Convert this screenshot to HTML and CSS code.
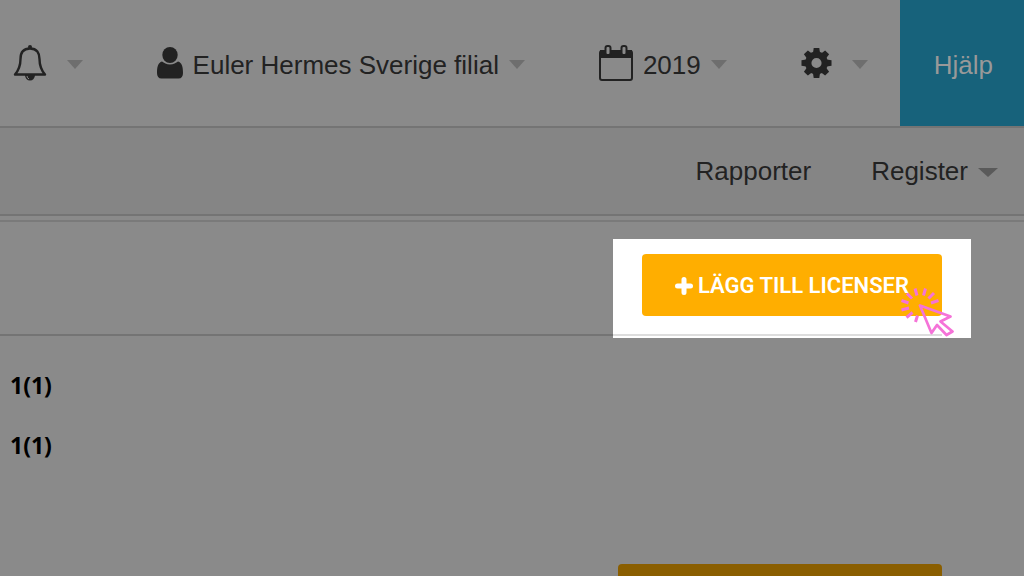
FILE: index.html
```
<!DOCTYPE html>
<html lang="sv">
<head>
    <meta charset="UTF-8">
    <meta name="viewport" content="width=device-width, initial-scale=1.0">
    <title>Licenser</title>
    <link rel="stylesheet" href="styles.css">
</head>
<body>
    <header class="topbar">
        <div class="topbar-menu">
            <button class="menu-item menu-item-wide" type="button" aria-label="Aviseringar">
                <svg class="icon" width="34" height="38" viewBox="0 0 34 38">
                    <path d="M17 4.500C10 4.500 7.500 9 7.500 15C7.500 23 5 27 2 30.500H32C29 27 26.500 23 26.500 15C26.500 9 24 4.500 17 4.500Z" fill="none" stroke="#222" stroke-width="2.400" stroke-linejoin="round"/>
                    <circle cx="17" cy="3" r="2" fill="#222"/>
                    <path d="M12 31H22A5 5.500 0 0 1 12 31Z" fill="#222"/>
                    <path d="M14 32Q14 34 16 35" fill="none" stroke="#8a8a8a" stroke-width="1"/>
                </svg>
                <span class="caret"></span>
            </button>
            <button class="menu-item" type="button">
                <svg class="icon" width="26" height="32" viewBox="0 0 26 32">
                    <ellipse cx="13" cy="8" rx="7.7" ry="8" fill="#222"/>
                    <path d="M5 14.5C7 16 9.500 17.500 13 17.500S19 16 21 14.500C25 15.500 26 20 26 26C26 29.500 24.500 31.500 21.500 31.500H4.500C1.500 31.500 0 29.500 0 26C0 20 1 15.500 5 14.500Z" fill="#222"/>
                </svg>
                <span class="menu-text">Euler Hermes Sverige filial</span>
                <span class="caret"></span>
            </button>
            <button class="menu-item" type="button">
                <svg class="icon" width="34" height="38" viewBox="0 0 34 38">
                    <rect x="1" y="7" width="32" height="29" rx="2" fill="none" stroke="#222" stroke-width="2"/>
                    <path d="M1 6H33V14H1Z" fill="#222"/>
                    <rect x="6.500" y="2" width="5" height="9" rx="2" fill="#8a8a8a" stroke="#222" stroke-width="2"/>
                    <rect x="22.500" y="2" width="5" height="9" rx="2" fill="#8a8a8a" stroke="#222" stroke-width="2"/>
                </svg>
                <span class="menu-text">2019</span>
                <span class="caret"></span>
            </button>
            <button class="menu-item menu-item-wide" type="button" aria-label="Inställningar">
                <svg class="icon" width="31" height="32" viewBox="-16 -16 32 32">
                    <g fill="#222">
                        <path id="tooth" d="M-3.800 -9L-2.900 -15.500H2.900L3.800 -9Z"/>
                        <use href="#tooth" transform="rotate(45)"/>
                        <use href="#tooth" transform="rotate(90)"/>
                        <use href="#tooth" transform="rotate(135)"/>
                        <use href="#tooth" transform="rotate(180)"/>
                        <use href="#tooth" transform="rotate(225)"/>
                        <use href="#tooth" transform="rotate(270)"/>
                        <use href="#tooth" transform="rotate(315)"/>
                    </g>
                    <circle r="8.500" fill="none" stroke="#222" stroke-width="6.500"/>
                </svg>
                <span class="caret"></span>
            </button>
        </div>
        <a class="help" href="#">Hjälp</a>
    </header>

    <nav class="subnav">
        <a class="subnav-link" href="#">Rapporter</a>
        <a class="subnav-link" href="#">Register <span class="caret caret-dark"></span></a>
    </nav>

    <main class="content">
        <div class="toolbar">
            <div class="highlight">
                <button class="add-button" type="button">
                    <svg width="18" height="18" viewBox="0 0 18 18">
                        <path d="M9 2.500V15.500M2.500 9H15.500" stroke="#fff" stroke-width="5" stroke-linecap="round"/>
                    </svg>
                    LÄGG TILL LICENSER
                </button>
                <svg class="pointer" width="54" height="52" viewBox="0 0 54 52">
                    <g fill="none" stroke="#f573d8">
                        <path d="M20 20.500L50.500 31.500L40.500 36.500L52.500 46.500L46.500 50L37 40L31.500 48Z" stroke-width="2.700" stroke-linejoin="round"/>
                        <path d="M7 8.500L12 13.500M15 3.500L17 10.500M25.500 3.500L23.500 10.500M34 8L28.500 13.500M38.500 15.500L31 18M1.500 15.500L8.500 18M1.500 25L9 23M6.500 32.500L12.500 27.500M15.500 37L17.500 30.500" stroke-width="3"/>
                    </g>
                </svg>
            </div>
        </div>
        <p class="count">1(1)</p>
        <p class="count">1(1)</p>
        <button class="save-button" type="button" aria-label="Spara"></button>
    </main>
</body>
</html>
```
FILE: styles.css
```
body {
    margin: 0;
    min-height: 100vh;
    overflow: hidden;
    background-color: #8a8a8a;
    color: #222;
    font-family: "Liberation Sans", Arial, sans-serif;
    font-size: 26px;
    line-height: 32px;
}
a {
    color: inherit;
    text-decoration: none;
}
button {
    border: none;
    font: inherit;
    color: inherit;
    cursor: pointer;
}
.topbar {
    display: flex;
    justify-content: flex-end;
    border-bottom: 2px solid #747474;
}
.topbar-menu {
    display: flex;
    align-items: center;
    gap: 74px;
    padding: 0 32px 0 12px;
}
.menu-item {
    display: flex;
    align-items: center;
    gap: 10px;
    padding: 0;
    background: none;
    white-space: nowrap;
}
.menu-item-wide {
    gap: 20px;
}
.menu-text {
    padding-top: 4px;
}
.icon {
    flex-shrink: 0;
}
.caret {
    flex-shrink: 0;
    border-left: 8px solid transparent;
    border-right: 8px solid transparent;
    border-top: 9px solid #6e6e6e;
    margin-top: 2px;
}
.caret-dark {
    border-left-width: 10px;
    border-right-width: 10px;
    border-top-color: #5a5a5a;
}
.help {
    padding: 49px 31px 45px 34px;
    background-color: #17627b;
    color: #999;
}
.subnav {
    display: flex;
    justify-content: flex-end;
    gap: 60px;
    padding: 27px 26px;
    background-color: #858585;
    border-bottom: 2px solid #747474;
}
.subnav-link {
    display: flex;
    align-items: center;
    gap: 10px;
}
.content {
    margin-top: 4px;
    border-top: 2px solid #7a7a7a;
    padding-right: 82px;
}
.toolbar {
    display: flex;
    justify-content: flex-end;
    padding-top: 17px;
    border-bottom: 2px solid #747474;
    margin-bottom: 33px;
}
.highlight {
    position: relative;
    padding: 15px 29px 22px;
    margin: 0 -29px -4px 0;
    background-color: #fff;
}
/* the toolbar line shows through the highlighted area */
.highlight::after {
    content: "";
    position: absolute;
    left: 0;
    right: 29px;
    bottom: 2px;
    height: 2px;
    background-color: #ddd;
}
.add-button {
    display: flex;
    align-items: center;
    justify-content: center;
    gap: 5px;
    width: 300px;
    height: 62px;
    padding: 2px 0 0;
    border-radius: 4px;
    background-color: #ffae00;
    color: #fff;
    font-family: Roboto, sans-serif;
    font-size: 22px;
    font-weight: 600;
    white-space: nowrap;
}
.pointer {
    position: absolute;
    right: 17px;
    bottom: 1px;
    z-index: 1;
}
.count {
    margin: 0 0 28px;
    padding-left: 10px;
    color: #000;
    font-family: "Open Sans", sans-serif;
    font-size: 23px;
    font-weight: bold;
}
.save-button {
    display: block;
    width: 324px;
    height: 62px;
    margin: 103px 0 0 auto;
    border-radius: 4px;
    background-color: #8a5e00;
}
```
